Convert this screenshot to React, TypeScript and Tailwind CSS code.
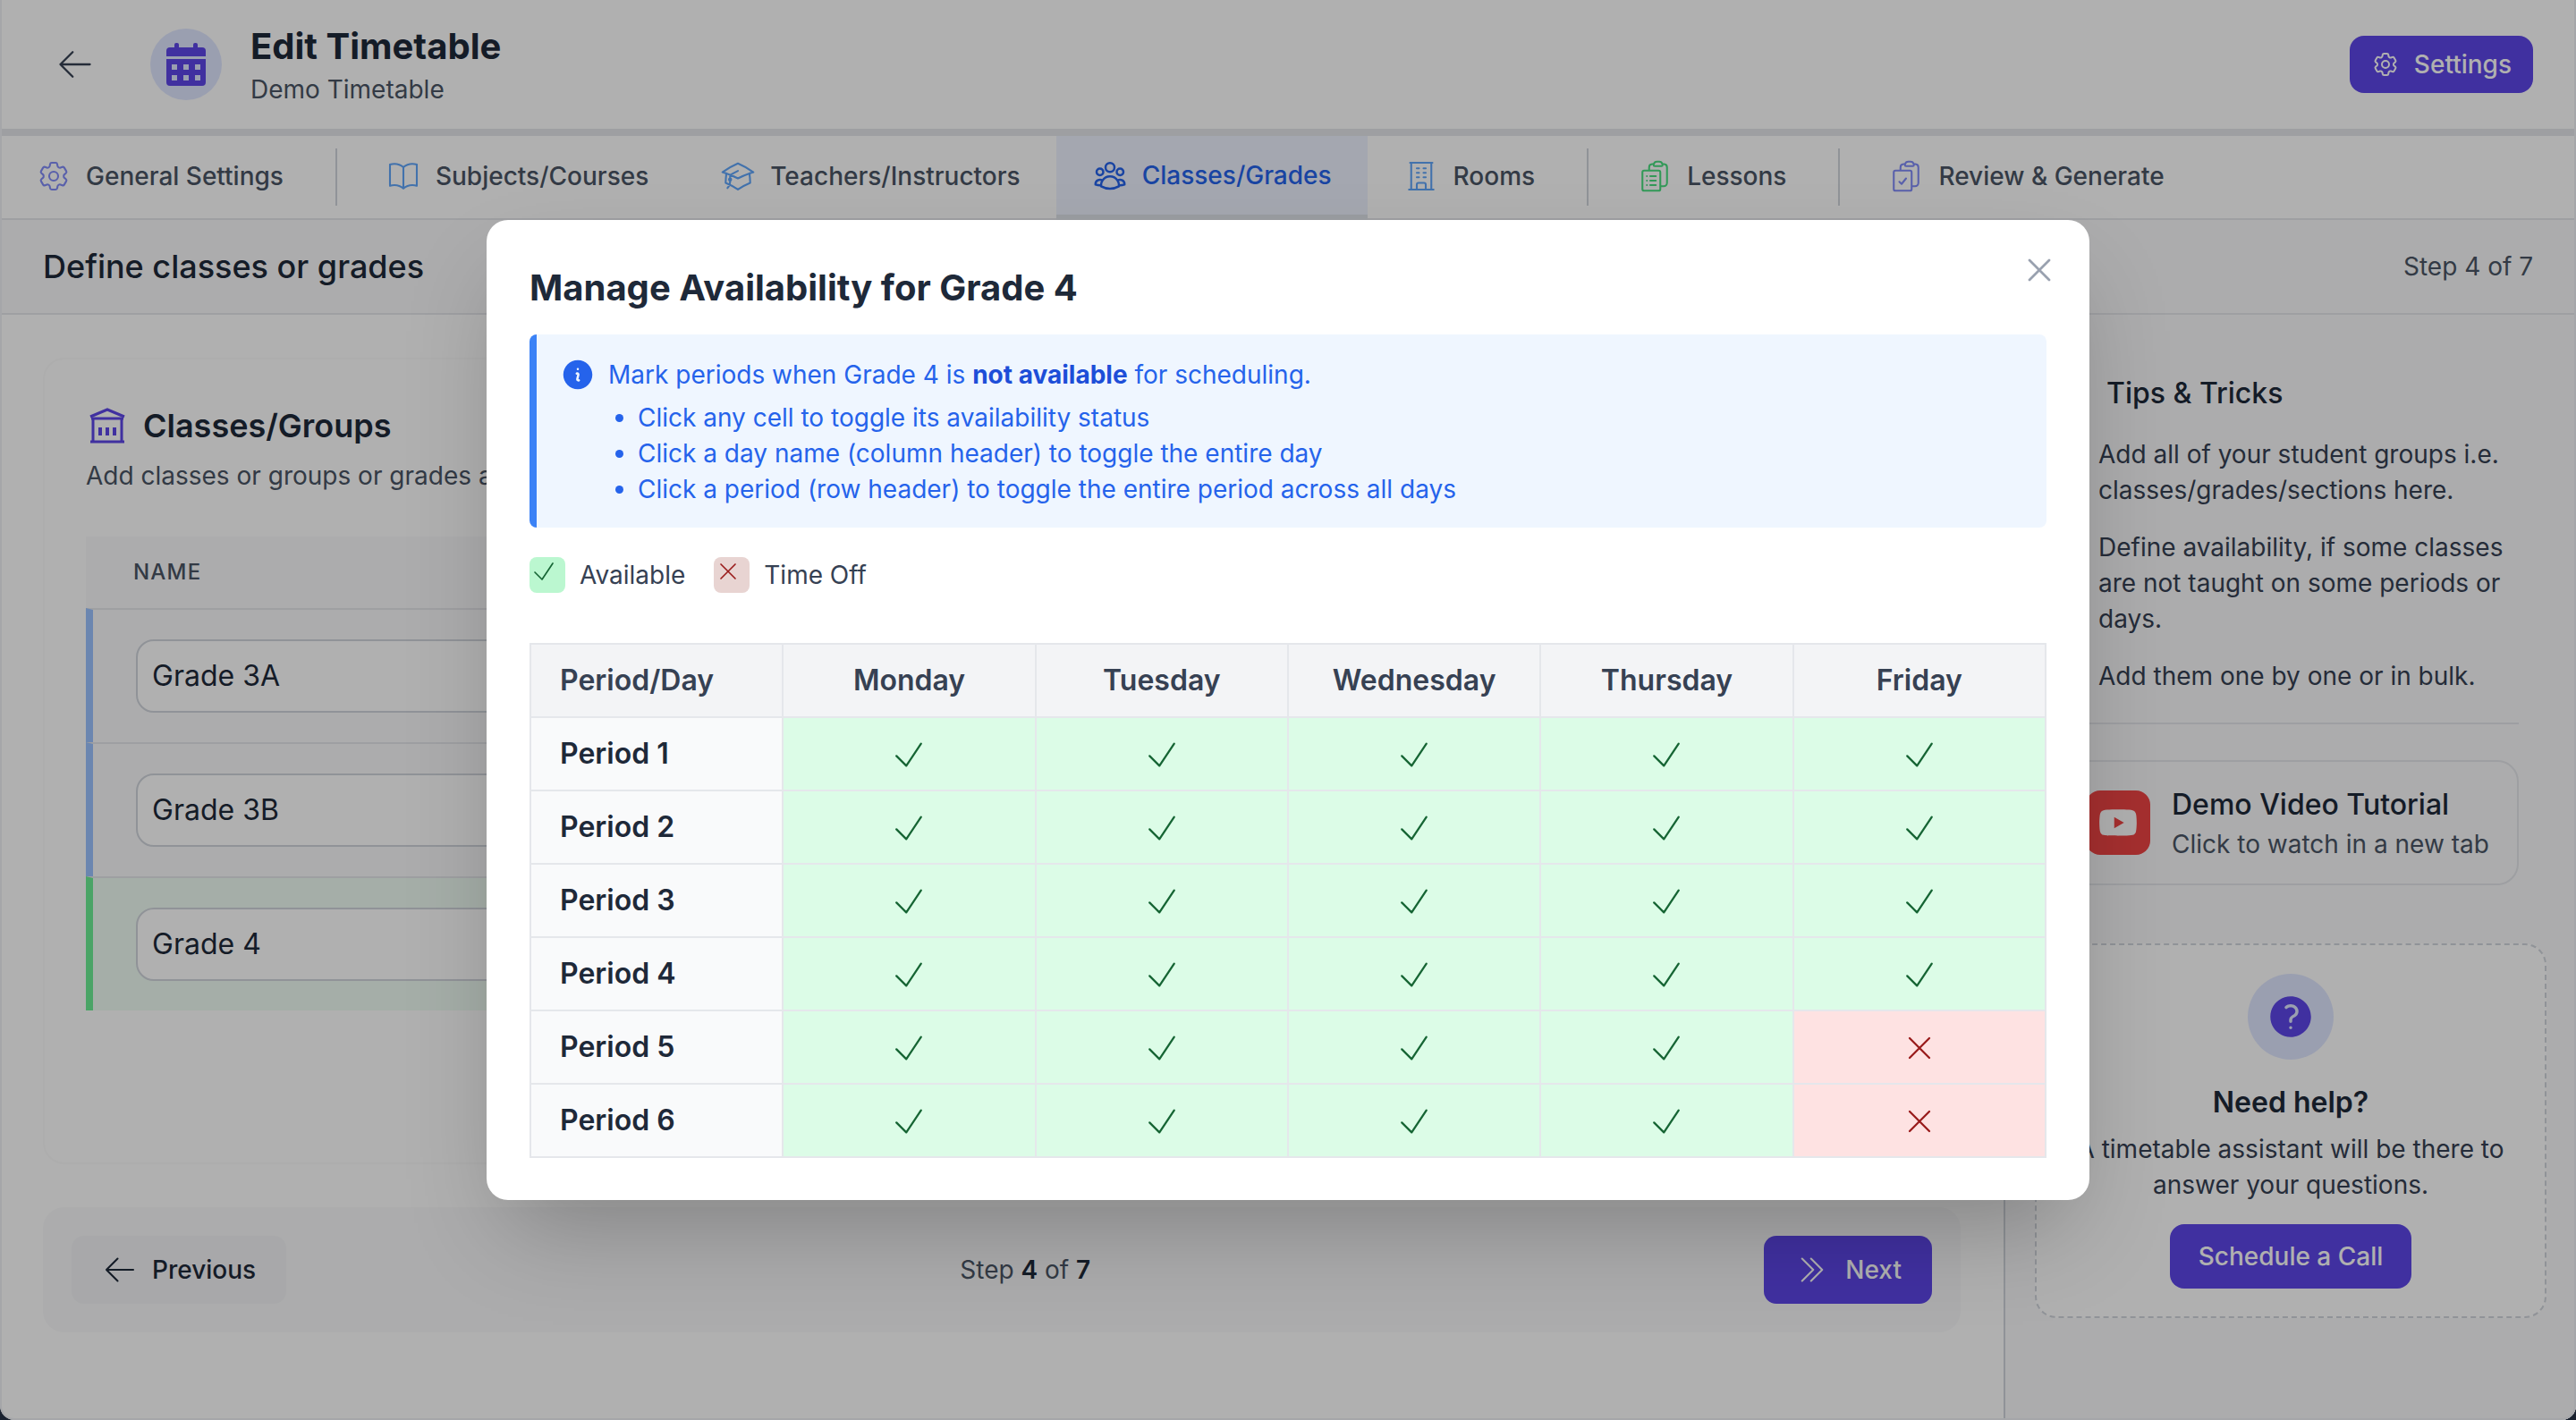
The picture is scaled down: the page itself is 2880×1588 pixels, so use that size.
import {
  HiInformationCircle,
  HiOutlineAcademicCap,
  HiOutlineArrowLeft,
  HiOutlineBookOpen,
  HiOutlineBuildingOffice,
  HiOutlineCheck,
  HiOutlineChevronDoubleRight,
  HiOutlineClipboardDocumentCheck,
  HiOutlineClipboardDocumentList,
  HiOutlineCog6Tooth,
  HiOutlineUserGroup,
  HiOutlineXMark,
  HiQuestionMarkCircle,
} from "react-icons/hi2";
import { FaYoutube } from "react-icons/fa";

const days = ["Monday", "Tuesday", "Wednesday", "Thursday", "Friday"];
const periods = [1, 2, 3, 4, 5, 6];

function CalendarLogo() {
  return (
    <svg viewBox="0 0 44 48" className="h-[48px] w-[44px] text-[#5d46e8]" fill="currentColor">
      <rect x="9" y="0" width="5" height="9" rx="2" />
      <rect x="30" y="0" width="5" height="9" rx="2" />
      <path d="M4 5h36a4 4 0 0 1 4 4v6H0V9a4 4 0 0 1 4-4z" />
      <path
        fillRule="evenodd"
        d="M0 18h44v26a4 4 0 0 1-4 4H4a4 4 0 0 1-4-4V18zM6 24v6h6v-6H6zm13 0v6h6v-6h-6zm13 0v6h6v-6h-6zM6 36v6h6v-6H6zm13 0v6h6v-6h-6zm13 0v6h6v-6h-6z"
      />
    </svg>
  );
}

function BankLogo() {
  return (
    <svg viewBox="0 0 40 40" className="h-[40px] w-[40px] text-[#5d46e8]" fill="none" stroke="currentColor" strokeWidth="3">
      <path d="M1 10 20 2l19 8" />
      <path d="M2 12h36M4 12v25M36 12v25M1 38h38" />
      <path d="M12 22v9M20 22v9M28 22v9" strokeWidth="4" />
    </svg>
  );
}

function Divider() {
  return <div className="ml-[18px] mr-[14px] mt-[14px] h-[64px] w-[2px] shrink-0 bg-gray-300" />;
}

function Tab({ icon, label, active }: { icon: React.ReactNode; label: string; active?: boolean }) {
  return (
    <div
      className={
        active
          ? "flex h-[94px] items-center gap-[16px] border-b-[6px] border-[#e0e4ea] bg-indigo-50 px-[40px] text-[28px] font-medium text-[#2563eb]"
          : "flex h-[94px] items-center gap-[16px] px-[40px] pb-[4px] text-[28px] font-medium text-gray-600"
      }
    >
      {icon}
      <span className="whitespace-nowrap">{label}</span>
    </div>
  );
}

function Header() {
  return (
    <header className="flex h-[152px] shrink-0 items-center justify-between border-b-[8px] border-gray-200 bg-white pl-[62px] pr-[48px]">
      <div className="flex items-center">
        <HiOutlineArrowLeft className="mr-[62px] h-[44px] w-[44px] stroke-[1.25] text-gray-700" />
        <div className="mr-[32px] flex h-[80px] w-[80px] items-center justify-center rounded-full bg-indigo-100">
          <CalendarLogo />
        </div>
        <div className="flex flex-col pt-[4px]">
          <div className="text-[40px] font-bold leading-[48px] text-gray-800">Edit Timetable</div>
          <div className="mt-[4px] text-[28px] leading-[40px] text-gray-600">Demo Timetable</div>
        </div>
      </div>
      <div className="flex h-[64px] items-center gap-[16px] rounded-[16px] bg-[#5d46e8] px-[24px] text-[28px] font-medium text-white">
        <HiOutlineCog6Tooth className="h-[32px] w-[32px]" />
        Settings
      </div>
    </header>
  );
}

function TabBar() {
  const cls = "h-[40px] w-[40px] shrink-0 stroke-[1.25]";
  return (
    <nav className="flex h-[94px] shrink-0 items-start border-b-[2px] border-gray-200 bg-white">
      <Tab icon={<HiOutlineCog6Tooth className={cls + " text-[#818cf8]"} />} label="General Settings" />
      <Divider />
      <Tab icon={<HiOutlineBookOpen className={cls + " text-[#60a5fa]"} />} label="Subjects/Courses" />
      <Tab icon={<HiOutlineAcademicCap className={cls + " text-[#60a5fa]"} />} label="Teachers/Instructors" />
      <Tab active icon={<HiOutlineUserGroup className="h-[40px] w-[40px] shrink-0" />} label="Classes/Grades" />
      <Tab icon={<HiOutlineBuildingOffice className={cls + " text-[#60a5fa]"} />} label="Rooms" />
      <Divider />
      <Tab icon={<HiOutlineClipboardDocumentList className={cls + " text-[#4ade80]"} />} label="Lessons" />
      <Divider />
      <Tab icon={<HiOutlineClipboardDocumentCheck className={cls + " text-[#818cf8]"} />} label="Review & Generate" />
    </nav>
  );
}

function ClassRow({ name, selected }: { name: string; selected?: boolean }) {
  return (
    <div
      className={
        selected
          ? "flex h-[150px] items-center border-l-[8px] border-t-[2px] border-l-[#6cee94] border-t-gray-200 bg-[#f0fdf4] pl-[48px]"
          : "flex h-[150px] items-center border-l-[8px] border-t-[2px] border-l-[#9bc2ff] border-t-gray-200 bg-gray-50 pl-[48px]"
      }
    >
      <div className="flex h-[82px] w-[900px] items-center rounded-[20px] border-[2px] border-gray-300 bg-white pl-[16px] text-[32px] text-gray-800">
        {name}
      </div>
    </div>
  );
}

function MainColumn() {
  return (
    <div className="flex w-[2240px] shrink-0 flex-col gap-[48px] px-[48px] pt-[48px]">
      <section className="h-[902px] rounded-[24px] border-[2px] border-[#fbfbfb] bg-white px-[46px] pt-[48px]">
        <div className="flex h-[52px] items-center gap-[20px] pl-[4px]">
          <BankLogo />
          <h2 className="text-[36px] font-semibold leading-[52px] text-gray-800">Classes/Groups</h2>
        </div>
        <p className="mt-[10px] text-[28px] leading-[40px] text-gray-600">
          Add classes or groups or grades and define their availability.
        </p>
        <div className="mt-[48px]">
          <div className="flex h-[80px] items-center bg-gray-50 pl-[53px] text-[24px] font-medium uppercase tracking-wider text-gray-600">
            Name
          </div>
          <ClassRow name="Grade 3A" />
          <ClassRow name="Grade 3B" />
          <ClassRow name="Grade 4" selected />
        </div>
      </section>
      <div className="flex h-[140px] items-center justify-between rounded-[24px] bg-gray-50 px-[32px]">
        <div className="flex h-[76px] items-center gap-[16px] rounded-[14px] bg-gray-100 px-[34px] text-[28px] font-medium text-gray-800">
          <HiOutlineArrowLeft className="h-[40px] w-[40px] stroke-[1.25]" />
          Previous
        </div>
        <div className="text-[28px] text-gray-600">
          Step <span className="font-semibold text-gray-800">4</span> of{" "}
          <span className="font-semibold text-gray-800">7</span>
        </div>
        <div className="flex h-[76px] items-center gap-[17px] rounded-[14px] bg-[#5d46e8] px-[34px] text-[28px] font-medium text-white">
          <HiOutlineChevronDoubleRight className="h-[40px] w-[40px] stroke-[1.25]" />
          Next
        </div>
      </div>
    </div>
  );
}

function Sidebar() {
  return (
    <aside className="flex flex-1 flex-col border-l-[2px] border-gray-300 bg-gray-50 px-[33px] pt-[68px]">
      <div className="pl-[15px] pr-[31px]">
        <h3 className="pl-[65px] text-[32px] font-medium leading-[40px] text-gray-800">Tips &amp; Tricks</h3>
        <div className="mt-[28px] flex flex-col gap-[24px] pl-[56px] text-[28px] leading-[40px] text-gray-700">
          <p>Add all of your student groups i.e. classes/grades/sections here.</p>
          <p>Define availability, if some classes are not taught on some periods or days.</p>
          <p>Add them one by one or in bulk.</p>
        </div>
        <div className="mt-[32px] h-[2px] bg-gray-200" />
        <div className="mt-[40px] flex h-[140px] items-center gap-[24px] rounded-[24px] border-[2px] border-gray-200 pl-[40px]">
          <div className="flex h-[72px] w-[72px] shrink-0 items-center justify-center rounded-[16px] bg-[#ef4444]">
            <FaYoutube className="h-[44px] w-[44px] text-white" />
          </div>
          <div>
            <div className="text-[32px] font-medium leading-[48px] text-gray-800">Demo Video Tutorial</div>
            <div className="text-[28px] leading-[40px] text-gray-600">Click to watch in a new tab</div>
          </div>
        </div>
      </div>
      <div className="mt-[65px] flex h-[419px] flex-col items-center rounded-[24px] border-[2px] border-dashed border-gray-300 bg-white pt-[32px]">
        <div className="flex h-[96px] w-[96px] items-center justify-center rounded-full bg-indigo-100">
          <HiQuestionMarkCircle className="h-[56px] w-[56px] text-[#5d46e8]" />
        </div>
        <div className="mt-[24px] text-[32px] font-semibold leading-[48px] text-gray-800">Need help?</div>
        <p className="mt-[8px] whitespace-nowrap text-center text-[28px] leading-[40px] text-gray-700">
          A timetable assistant will be there to
          <br />
          answer your questions.
        </p>
        <div className="mt-[24px] flex h-[72px] items-center rounded-[16px] bg-[#5d46e8] px-[32px] text-[28px] font-medium text-white">
          Schedule a Call
        </div>
      </div>
    </aside>
  );
}

function AvailabilityTable() {
  const border = "border-[2px] border-gray-200";
  return (
    <table className="mt-[55px] w-full table-fixed border-collapse">
      <thead>
        <tr className="h-[82px] bg-gray-100 text-[32px] font-semibold text-gray-700">
          <th className={border + " pl-[32px] text-left font-semibold"}>Period/Day</th>
          {days.map((d) => (
            <th key={d} className={border + " font-semibold"}>
              {d}
            </th>
          ))}
        </tr>
      </thead>
      <tbody>
        {periods.map((p) => (
          <tr key={p} className="h-[82px]">
            <td className={border + " bg-gray-50 pl-[32px] text-[32px] font-semibold text-gray-800"}>Period {p}</td>
            {days.map((d) => {
              const off = d === "Friday" && p >= 5;
              return (
                <td key={d} className={border + (off ? " bg-[#fee2e2]" : " bg-[#dcfce7]")}>
                  <div className="flex justify-center pt-[2px]">
                    {off ? (
                      <HiOutlineXMark className="h-[44px] w-[44px] stroke-[1.25] text-[#991b1b]" />
                    ) : (
                      <HiOutlineCheck className="h-[44px] w-[44px] stroke-[1.25] text-[#166534]" />
                    )}
                  </div>
                </td>
              );
            })}
          </tr>
        ))}
      </tbody>
    </table>
  );
}

function AvailabilityModal() {
  return (
    <div className="absolute inset-0 flex items-start justify-center bg-black/[0.31] pt-[246px]">
      <div className="relative h-[1096px] w-[1792px] rounded-[24px] bg-white px-[48px] pt-[52px] shadow-[0_50px_100px_-24px_rgba(0,0,0,0.25)]">
        <HiOutlineXMark className="absolute right-[34px] top-[34px] h-[44px] w-[44px] text-gray-400" />
        <h2 className="text-[40px] font-bold leading-[48px] text-gray-800">Manage Availability for Grade 4</h2>
        <div className="mt-[28px] h-[216px] rounded-[8px] border-l-[8px] border-[#3b82f6] bg-[#eff6ff] pl-[26px] pt-[25px] text-[28px] leading-[40px] text-[#2563eb]">
          <div className="flex items-center gap-[14px]">
            <HiInformationCircle className="h-[40px] w-[40px] text-[#2563eb]" />
            <span>
              Mark periods when Grade 4 is <strong className="font-bold text-[#1d4ed8]">not available</strong> for
              scheduling.
            </span>
          </div>
          <ul className="mt-[8px] list-disc pl-[87px]">
            <li>Click any cell to toggle its availability status</li>
            <li>Click a day name (column header) to toggle the entire day</li>
            <li>Click a period (row header) to toggle the entire period across all days</li>
          </ul>
        </div>
        <div className="mt-[32px] flex items-center text-[28px] text-gray-700">
          <div className="flex h-[40px] w-[40px] rounded-[8px] bg-[#bbf7d0]">
            <HiOutlineCheck className="h-[32px] w-[32px] stroke-[1.25] text-[#166534]" />
          </div>
          <span className="ml-[16px]">Available</span>
          <div className="ml-[32px] flex h-[40px] w-[40px] rounded-[8px] bg-[#e8d4d2]">
            <HiOutlineXMark className="h-[32px] w-[32px] stroke-[1.25] text-[#991b1b]" />
          </div>
          <span className="ml-[16px]">Time Off</span>
        </div>
        <AvailabilityTable />
      </div>
    </div>
  );
}

export default function App() {
  return (
    <div className="h-[1588px] w-[2880px] bg-[#1a2230] font-[Inter,sans-serif]">
      <div className="relative flex h-full w-full flex-col overflow-hidden rounded-b-[16px] bg-white">
        <Header />
        <TabBar />
        <div className="flex h-[106px] shrink-0 items-center justify-between border-b-[2px] border-gray-200 bg-gray-50 pl-[48px] pr-[48px]">
          <h1 className="text-[36px] font-medium text-gray-800">Define classes or grades</h1>
          <span className="text-[28px] text-gray-600">Step 4 of 7</span>
        </div>
        <div className="flex min-h-0 flex-1">
          <MainColumn />
          <Sidebar />
        </div>
        <AvailabilityModal />
        <div className="pointer-events-none absolute inset-0 rounded-b-[16px] border-x-[2px] border-b-[2px] border-[#a5a6a9]" />
      </div>
    </div>
  );
}
